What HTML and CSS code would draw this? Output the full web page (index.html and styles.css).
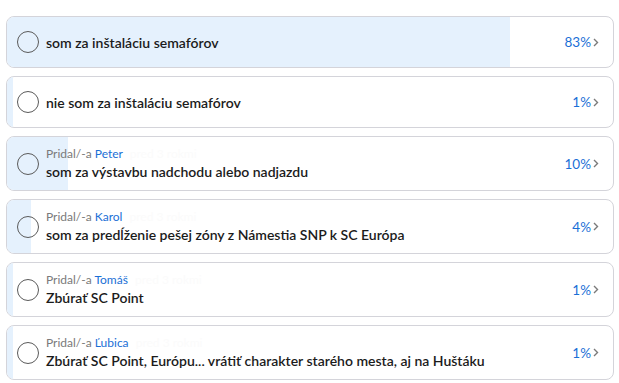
FILE: index.html
```html
<!DOCTYPE html>
<html lang="sk">
<head>
<meta charset="utf-8">
<title>Anketa</title>
<link rel="stylesheet" href="styles.css">
</head>
<body>
<div class="poll">

	<div class="option">
		<div class="fill" style="width: 83%"></div>
		<div class="row">
			<span class="radio"></span>
			<div class="text">
				<div class="title">som za inštaláciu semafórov</div>
			</div>
			<span class="pct">83%</span>
			<svg class="chev" width="6" height="9" viewBox="0 0 6 9"><polyline points="1,1 4.5,4.5 1,8" /></svg>
		</div>
	</div>

	<div class="option">
		<div class="fill" style="width: 1%"></div>
		<div class="row">
			<span class="radio"></span>
			<div class="text">
				<div class="title">nie som za inštaláciu semafórov</div>
			</div>
			<span class="pct">1%</span>
			<svg class="chev" width="6" height="9" viewBox="0 0 6 9"><polyline points="1,1 4.5,4.5 1,8" /></svg>
		</div>
	</div>

	<div class="option">
		<div class="fill" style="width: 10%"></div>
		<div class="row">
			<span class="radio"></span>
			<div class="text">
				<div class="meta">Pridal/-a <a href="#">Peter</a> <span class="when">pred 3 rokmi</span></div>
				<div class="title">som za výstavbu nadchodu alebo nadjazdu</div>
			</div>
			<span class="pct">10%</span>
			<svg class="chev" width="6" height="9" viewBox="0 0 6 9"><polyline points="1,1 4.5,4.5 1,8" /></svg>
		</div>
	</div>

	<div class="option">
		<div class="fill" style="width: 4%"></div>
		<div class="row">
			<span class="radio"></span>
			<div class="text">
				<div class="meta">Pridal/-a <a href="#">Karol</a> <span class="when">pred 3 rokmi</span></div>
				<div class="title">som za predĺženie pešej zóny z Námestia SNP k SC Európa</div>
			</div>
			<span class="pct">4%</span>
			<svg class="chev" width="6" height="9" viewBox="0 0 6 9"><polyline points="1,1 4.5,4.5 1,8" /></svg>
		</div>
	</div>

	<div class="option">
		<div class="fill" style="width: 1%"></div>
		<div class="row">
			<span class="radio"></span>
			<div class="text">
				<div class="meta">Pridal/-a <a href="#">Tomáš</a> <span class="when">pred 3 rokmi</span></div>
				<div class="title">Zbúrať SC Point</div>
			</div>
			<span class="pct">1%</span>
			<svg class="chev" width="6" height="9" viewBox="0 0 6 9"><polyline points="1,1 4.5,4.5 1,8" /></svg>
		</div>
	</div>

	<div class="option">
		<div class="fill" style="width: 1%"></div>
		<div class="row">
			<span class="radio"></span>
			<div class="text">
				<div class="meta">Pridal/-a <a href="#">Ľubica</a> <span class="when">pred 3 rokmi</span></div>
				<div class="title">Zbúrať SC Point, Európu... vrátiť charakter starého mesta, aj na Huštáku</div>
			</div>
			<span class="pct">1%</span>
			<svg class="chev" width="6" height="9" viewBox="0 0 6 9"><polyline points="1,1 4.5,4.5 1,8" /></svg>
		</div>
	</div>

</div>
</body>
</html>
```

FILE: styles.css
```css
body {
	margin: 0;
	background: #fff;
	font-family: Lato, "Noto Sans", sans-serif;
	color: #1b1b1b;
}

.poll {
	display: flex;
	flex-direction: column;
	gap: 8px;
	padding: 16px 5px 0 6px;
}

.option {
	position: relative;
	border: 1px solid #d4d4da;
	border-radius: 8px;
	overflow: hidden;
	background: #fff;
}

.fill {
	position: absolute;
	left: 0;
	top: 0;
	bottom: 0;
	background: #e5f1fd;
}

.row {
	position: relative;
	display: flex;
	align-items: center;
	box-sizing: border-box;
	min-height: 50px;
	padding: 9px 14px 9px 10px;
}

.radio {
	flex: none;
	width: 20px;
	height: 20px;
	border: 1.3px solid #5a5a5a;
	border-radius: 50%;
	margin-right: 7px;
}

.text {
	flex: 1;
	min-width: 0;
}

.meta {
	font-size: 12px;
	line-height: 16px;
	color: #7a7a7a;
}

.meta a {
	color: #1a6fd6;
	text-decoration: none;
}

/* date is nearly invisible in the original */
.when {
	color: #fbfbfb;
	margin-left: 4px;
}

.title {
	font-size: 14px;
	font-weight: 600;
	line-height: 19px;
}

.pct {
	flex: none;
	font-size: 13.5px;
	color: #1a6fd6;
	margin-left: 8px;
}

.chev {
	flex: none;
	margin-left: 2px;
	fill: none;
	stroke: #7a7a7a;
	stroke-width: 1.4;
}
```
